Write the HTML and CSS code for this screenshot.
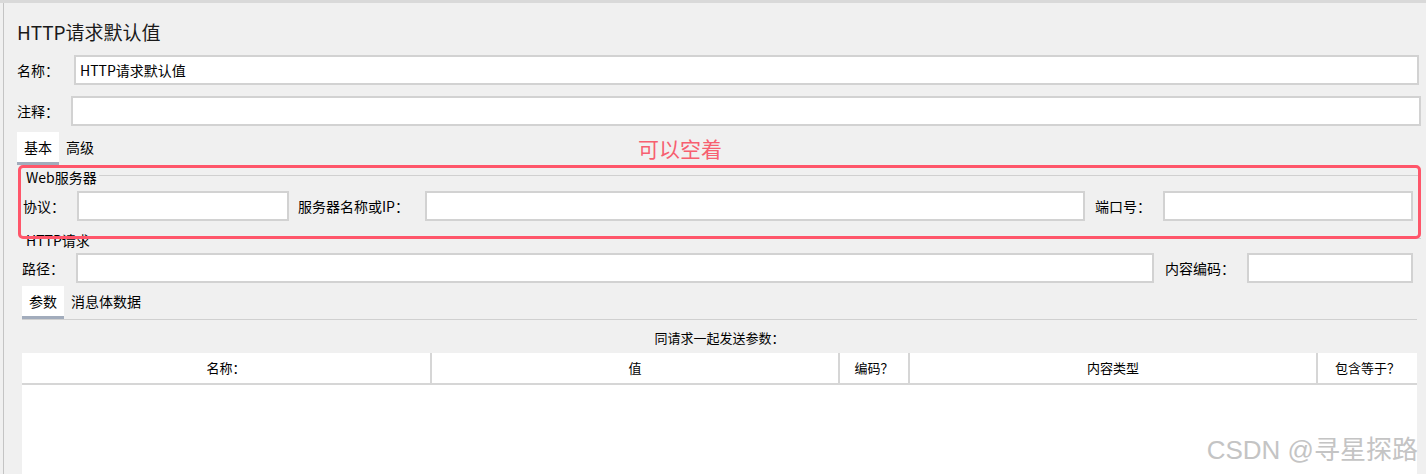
FILE: index.html
```html
<!DOCTYPE html>
<html>
<head>
  <meta charset="utf-8">
  <title>HTTP请求默认值</title>
  <link rel="stylesheet" href="styles.css">
</head>
<body>
  <div class="panel">
    <h1 class="title">HTTP请求默认值</h1>

    <div class="row row-name">
      <label class="lbl lbl-name">名称：</label>
      <input class="field" type="text" value="HTTP请求默认值">
    </div>

    <div class="row row-comment">
      <label class="lbl lbl-comment">注释：</label>
      <input class="field" type="text">
    </div>

    <div class="tabs tabs-main">
      <div class="tab active">基本</div>
      <div class="tab">高级</div>
    </div>

    <div class="group">
      <div class="legend"><span>Web服务器</span><div class="legend-line"></div></div>
      <div class="row row-server">
        <label class="lbl lbl-proto">协议：</label>
        <input class="field field-proto" type="text">
        <label class="lbl lbl-host">服务器名称或IP：</label>
        <input class="field" type="text">
        <label class="lbl lbl-port">端口号：</label>
        <input class="field field-port" type="text">
      </div>

      <div class="legend legend-http"><span>HTTP请求</span><div class="legend-line"></div></div>
      <div class="row row-path">
        <label class="lbl lbl-path">路径：</label>
        <input class="field" type="text">
        <label class="lbl lbl-enc">内容编码：</label>
        <input class="field field-enc" type="text">
      </div>

      <div class="tabs tabs-sub">
        <div class="tab active">参数</div>
        <div class="tab">消息体数据</div>
      </div>

      <div class="caption">同请求一起发送参数：</div>

      <div class="table">
        <div class="thead">
          <div class="th">名称：</div>
          <div class="th">值</div>
          <div class="th">编码？</div>
          <div class="th">内容类型</div>
          <div class="th">包含等于？</div>
        </div>
        <div class="tbody"></div>
      </div>
    </div>
  </div>

  <!-- annotation drawn on top of the screenshot -->
  <div class="mark-box"></div>
  <div class="mark-text">可以空着</div>
  <div class="watermark">CSDN @寻星探路</div>
</body>
</html>
```

FILE: styles.css
```css
body {
  margin: 0;
  background: #f0f0f0;
  border-top: 3px solid #d9d9d9;
  font-family: "Noto Sans CJK SC", "Liberation Sans", sans-serif;
  font-size: 14px;
  color: #000;
}
.panel {
  margin-left: 3px;
  border-left: 1px solid #c4c4c4;
  padding-left: 13px;
  padding-right: 5px;
}
.title {
  margin: 0;
  padding-top: 18px;
  height: 22px;
  line-height: 22px;
  font-size: 19px;
  font-weight: normal;
  color: #1a1a1a;
}
.row {
  display: flex;
  align-items: center;
  height: 30px;
}
.lbl {
  flex: none;
  white-space: nowrap;
}
.field {
  flex: 1;
  min-width: 0;
  height: 30px;
  box-sizing: border-box;
  border: 2px solid #d2d2d2;
  background: #fff;
  padding: 0 4px;
  font-family: inherit;
  font-size: 14px;
  color: #000;
  outline: none;
}
.row-name {
  margin-top: 12px;
  margin-right: 2px;
}
.lbl-name { width: 57px; }
.row-comment { margin-top: 11px; }
.lbl-comment { width: 54px; }

.tabs {
  display: flex;
  height: 33px;
}
.tab {
  height: 30px;
  line-height: 30px;
  padding: 0 7px;
}
.tab.active {
  background: #fff;
  border-bottom: 3px solid #a2acbc;
}
.tabs-main { margin-top: 6px; }

.group {
  margin-left: 5px;
}
.legend {
  display: flex;
  align-items: center;
  height: 22px;
  margin-top: 1px;
  padding-left: 4px;
}
.legend span {
  margin-right: 2px;
}
.legend-line {
  flex: 1;
  border-top: 1px solid #d0d0d0;
  margin-top: -3px;
}
.row-server {
  margin-top: 3px;
}
.lbl-proto { width: 54px; padding-left: 1px; }
.field-proto { flex: none; width: 212px; }
.lbl-host { width: 127px; padding-left: 9px; }
.lbl-port { width: 68px; padding-left: 10px; }
.field-port { flex: none; width: 250px; margin-right: 8px; }

.legend-http { margin-top: 8px; }
.row-path { margin-top: 2px; }
.lbl-path { width: 54px; }
.lbl-enc { width: 82px; padding-left: 11px; }
.field-enc { flex: none; width: 166px; margin-right: 8px; }

.tabs-sub {
  margin-top: 3px;
  margin-right: 4px;
  border-bottom: 1px solid #d0d0d0;
}

.caption {
  margin-top: 8px;
  text-align: center;
  height: 20px;
  line-height: 20px;
  margin-right: 4px;
  font-size: 13px;
}
.table {
  margin-top: 5px;
  margin-right: 4px;
  background: #fff;
  height: 122px;
}
.thead {
  display: grid;
  grid-template-columns: 408px 408px 70px 408px 1fr;
  height: 30px;
  border-bottom: 2px solid #d6d6d6;
}
.th {
  line-height: 30px;
  text-align: center;
  font-size: 13px;
  border-left: 2px solid #d6d6d6;
}
.th:first-child { border-left: none; }

.mark-box {
  position: absolute;
  left: 18px;
  top: 165px;
  width: 1397px;
  height: 68px;
  border: 3px solid #ff566a;
  border-radius: 5px;
}
.mark-text {
  position: absolute;
  left: 638px;
  top: 133px;
  font-size: 21px;
  color: #f75f70;
}
.watermark {
  position: absolute;
  right: 8px;
  top: 429px;
  font-family: "Liberation Sans", "Noto Sans CJK SC", sans-serif;
  font-size: 26px;
  color: #c4c4c4;
}
```
